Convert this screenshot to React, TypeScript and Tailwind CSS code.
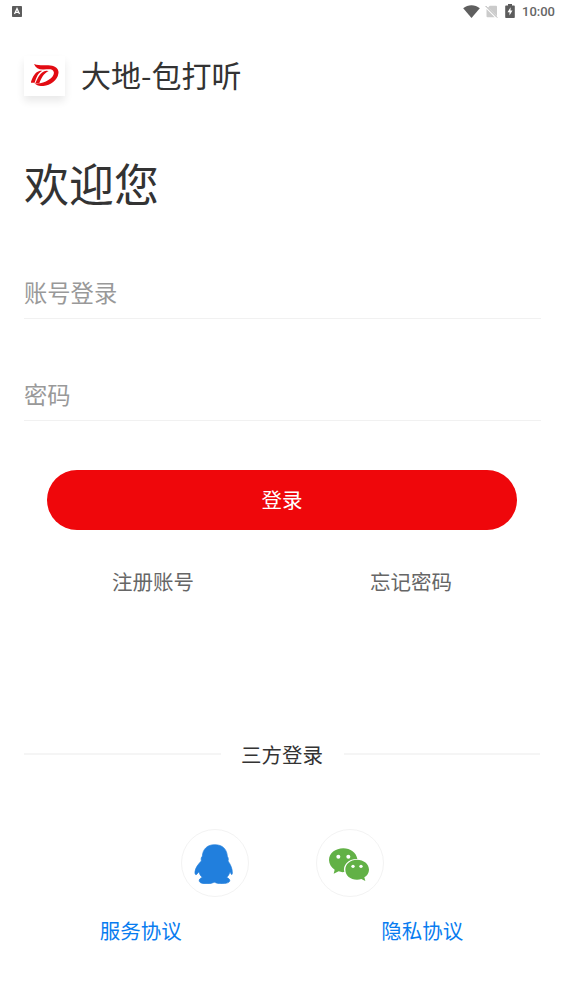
import React from "react";

function StatusBar() {
  return (
    <header className="flex h-6 items-center justify-between pl-3 pr-2">
      <svg className="mt-[-1px] h-[11px] w-[10px]" viewBox="0 0 10 11">
        <rect width="10" height="11" rx="0.8" fill="#5c5c5c" />
        <path d="M2.5 8 5 2.6 7.5 8M3.4 6.3h3.2" fill="none" stroke="#fff" strokeWidth="1.3" />
      </svg>
      <div className="flex items-center">
        <svg className="mt-[-2px] h-[13px] w-[17px]" viewBox="0 0 17 13">
          <path d="M0.2 3.2C5-.9 12-.9 16.8 3.2L8.5 13Z" fill="#5f5f5f" />
        </svg>
        <svg className="ml-[5px] mt-[-2px] h-[13px] w-[13px]" viewBox="0 0 13 13">
          <path d="M4.8.8H11q1 0 1 1v9.4L3 2.6ZM1.5 4.1l8.2 8.1H2.5q-1 0-1-1Z" fill="#cbcbcb" />
          <path d="M.6 1 12.2 12.6" stroke="#aaa" strokeWidth="1" />
        </svg>
        <svg className="ml-[7px] mt-[-2px] h-[14px] w-[10px]" viewBox="0 0 10 14">
          <path d="M3 0h4v1.4h2q.8 0 .8.8v11q0 .8-.8.8H1q-.8 0-.8-.8v-11q0-.8.8-.8h2Z" fill="#5c5c5c" />
          <path d="M5.6 3.2 2.5 8.2h2v3.4l3-5.1h-2Z" fill="#fff" />
        </svg>
        <span className="ml-[7px] font-['Roboto',sans-serif] text-[13px] font-medium leading-6 text-[#666]">10:00</span>
      </div>
    </header>
  );
}

function Logo() {
  return (
    <div className="flex h-10 w-[41px] items-center justify-center bg-white shadow-[0_5px_8px_rgba(0,0,0,0.09)]">
      <svg className="mt-[-3px] h-[22px] w-[28px]" viewBox="46 55 84 63" preserveAspectRatio="none">
        <path
          d="M55 55C75 61 88 57 104 59C122 61 131 70 128 83C125 102 105 116 83 118C73 119 63 116 56 110C70 112 86 109 98 101C110 94 117 84 114 77C111 68 99 70 84 71C70 72 60 66 55 55Z"
          fill="#e20b12"
        />
        <path d="M73 74C57 78 50 94 45 109H57C62 93 66 82 80 74Z" fill="#e20b12" />
        <path d="M92 74C74 77 68 91 59 110H71C77 95 84 82 99 75Z" fill="#e20b12" />
      </svg>
    </div>
  );
}

function QQIcon() {
  return (
    <svg className="ml-[-2px] mt-[1px] size-10" viewBox="72 70 120 120">
      <path
        d="M134 72C111 72 98 86 97 107C93 110 93 116 94 121C86 129 76 141 75 153C74 162 78 165 82 159L87 153C88 160 92 166 97 170C90 173 86 177 88 182C90 190 112 191 124 188C128 187 130 185 133 185C136 185 138 187 142 188C155 191 175 189 179 182C181 177 176 173 170 170C175 166 178 160 180 153C183 160 186 166 187 158C188 145 181 130 174 121C176 116 175 111 172 107C171 86 158 72 134 72Z"
        fill="#217fdd"
        stroke="#217fdd"
        strokeWidth="2"
      />
    </svg>
  );
}

function WeChatIcon() {
  return (
    <svg className="ml-[-2px] mt-[2px] h-[33px] w-10" viewBox="478 82 120 99">
      <path
        d="M521 83C497 83 478 98 478 118C478 130 485 140 495 147L492 159L507 152C512 154 518 155 524 154C518 133 537 114 563 115C560 96 542 83 521 83Z"
        fill="#62b146"
      />
      <path
        d="M562 117C542 117 527 130 527 147C527 164 542 177 562 177C567 177 571 176 575 175L587 181L584 170C592 165 598 157 598 147C598 130 582 117 562 117Z"
        fill="#62b146"
      />
      <g fill="#fff">
        <circle cx="506" cy="108" r="6" />
        <circle cx="536" cy="108" r="6" />
        <circle cx="550" cy="137" r="5" />
        <circle cx="574" cy="137" r="5" />
      </g>
    </svg>
  );
}

function Field({ label, type }: { label: string; type: string }) {
  return (
    <input
      type={type}
      placeholder={label}
      aria-label={label}
      className="block h-[51px] w-full border-b-[1.5px] border-[#f1f1f1] bg-transparent p-0 pb-[2px] text-[23.3px] leading-[48px] text-[#333] outline-none placeholder:text-[#999] placeholder:opacity-100"
    />
  );
}

export default function App() {
  return (
    <div className="flex h-[1002px] w-[563px] flex-col overflow-hidden bg-white font-['Noto_Sans_CJK_SC',sans-serif] text-[#333]">
      <StatusBar />
      <main className="flex flex-col pl-6 pr-[22px]">
        <div className="mt-8 flex h-10 items-center">
          <Logo />
          <h1 className="mb-[4px] ml-4 text-[30px] leading-10">大地-包打听</h1>
        </div>
        <h2 className="mt-[57px] text-[45px] leading-[60px]">欢迎您</h2>
        <form className="mt-[55px]" onSubmit={(e) => e.preventDefault()}>
          <Field label="账号登录" type="text" />
          <div className="h-[51px]" />
          <Field label="密码" type="password" />
          <button className="ml-[23px] mt-[49px] block h-[60px] w-[470px] rounded-full bg-[#ef070b] pb-[2px] text-[20.5px] leading-[58px] text-white">
            登录
          </button>
        </form>
        <nav className="mt-[36px] grid h-[30px] grid-cols-2 pr-px text-center text-[20.5px] leading-[30px] text-[#666]">
          <a>注册账号</a>
          <a>忘记密码</a>
        </nav>
        <div className="mt-[143px] flex h-[30px] items-center pr-px">
          <i className="h-[1.5px] flex-1 bg-[#f5f5f5]" />
          <span className="mx-[20.5px] text-[20.5px] leading-[30px]">三方登录</span>
          <i className="h-[1.5px] flex-1 bg-[#f5f5f5]" />
        </div>
        <div className="mt-[60px] flex justify-center gap-[67px]">
          <button aria-label="QQ" className="flex size-[68px] items-center justify-center rounded-full border border-[#f3f3f3]">
            <QQIcon />
          </button>
          <button aria-label="微信" className="flex size-[68px] items-center justify-center rounded-full border border-[#f3f3f3]">
            <WeChatIcon />
          </button>
        </div>
      </main>
      <footer className="mt-[18px] grid h-[30px] grid-cols-2 text-center text-[20.5px] leading-[30px] text-[#087cf0]">
        <a>服务协议</a>
        <a>隐私协议</a>
      </footer>
    </div>
  );
}
